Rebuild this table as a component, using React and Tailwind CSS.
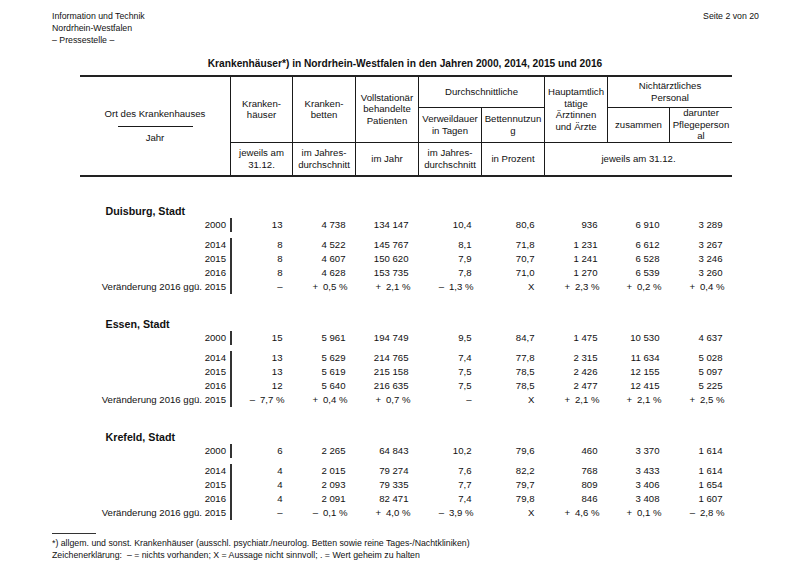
import React from "react";

const sections = [
  {
    name: "Duisburg, Stadt",
    rows: [
      ["2000", "13", "4 738", "134 147", "10,4", "80,6", "936", "6 910", "3 289"],
      ["2014", "8", "4 522", "145 767", "8,1", "71,8", "1 231", "6 612", "3 267"],
      ["2015", "8", "4 607", "150 620", "7,9", "70,7", "1 241", "6 528", "3 246"],
      ["2016", "8", "4 628", "153 735", "7,8", "71,0", "1 270", "6 539", "3 260"],
      ["Veränderung 2016 ggü. 2015", "–", "+\u20020,5 %", "+\u20022,1 %", "–\u20021,3 %", "X", "+\u20022,3 %", "+\u20020,2 %", "+\u20020,4 %"],
    ],
  },
  {
    name: "Essen, Stadt",
    rows: [
      ["2000", "15", "5 961", "194 749", "9,5", "84,7", "1 475", "10 530", "4 637"],
      ["2014", "13", "5 629", "214 765", "7,4", "77,8", "2 315", "11 634", "5 028"],
      ["2015", "13", "5 619", "215 158", "7,5", "78,5", "2 426", "12 155", "5 097"],
      ["2016", "12", "5 640", "216 635", "7,5", "78,5", "2 477", "12 415", "5 225"],
      ["Veränderung 2016 ggü. 2015", "–\u20027,7 %", "+\u20020,4 %", "+\u20020,7 %", "–", "X", "+\u20022,1 %", "+\u20022,1 %", "+\u20022,5 %"],
    ],
  },
  {
    name: "Krefeld, Stadt",
    rows: [
      ["2000", "6", "2 265", "64 843", "10,2", "79,6", "460", "3 370", "1 614"],
      ["2014", "4", "2 015", "79 274", "7,6", "82,2", "768", "3 433", "1 614"],
      ["2015", "4", "2 093", "79 335", "7,7", "79,7", "809", "3 406", "1 654"],
      ["2016", "4", "2 091", "82 471", "7,4", "79,8", "846", "3 408", "1 607"],
      ["Veränderung 2016 ggü. 2015", "–", "–\u20020,1 %", "+\u20024,0 %", "–\u20023,9 %", "X", "+\u20024,6 %", "+\u20020,1 %", "–\u20022,8 %"],
    ],
  },
];

const cols = "grid grid-cols-[150px_62px_63px_63px_63px_63px_63px_62px_63px]";
const cell = "flex flex-col items-center justify-center text-center border-[#1a1a1a]";

const DataRow = ({ row, first }) => (
  <div className={cols + (first ? " pb-[6px]" : "")}>
    <div className="text-right pr-[4px] leading-[14px]">{row[0]}</div>
    {row.slice(1).map((v, i) => (
      <div
        key={i}
        className={
          "text-right leading-[14px] whitespace-pre " +
          (v.includes("%") ? "pr-[7.5px]" : "pr-[9.5px]") +
          (i === 0 ? " border-l-2 border-[#333]" : "")
        }
      >
        {v}
      </div>
    ))}
  </div>
);

const App = () => {
  return (
    <div className="w-[810px] h-[572px] bg-white text-[#111] font-['Liberation_Sans',Arial,sans-serif] overflow-hidden">
      <div className="flex justify-between pl-[52px] pr-[51px] pt-[10px] text-[8.75px] leading-[12px]">
        <div>
          <div>Information und Technik</div>
          <div>Nordrhein-Westfalen</div>
          <div>– Pressestelle –</div>
        </div>
        <div>Seite 2 von 20</div>
      </div>

      <div className="mt-[10.5px] text-center font-bold text-[10.2px] leading-[14px]">
        Krankenhäuser*) in Nordrhein-Westfalen in den Jahren 2000, 2014, 2015 und 2016
      </div>

      {/* Tabellenkopf */}
      <div className={cols + " ml-[80px] w-[652px] mt-[4px] grid-rows-[31px_34px_33px] border-t-2 border-b-2 border-[#222] text-[9.6px] leading-[11.5px]"}>
        <div className={cell + " row-span-3 col-start-1 row-start-1"}>
          <div className="leading-[12px]">Ort des Krankenhauses</div>
          <div className="w-[75px] h-px bg-[#1a1a1a] mt-[6px]"></div>
          <div className="leading-[12px] mt-[5px]">Jahr</div>
        </div>
        <div className={cell + " row-span-2 col-start-2 row-start-1 border-l"}>Kranken-<br />häuser</div>
        <div className={cell + " row-span-2 col-start-3 row-start-1 border-l"}>Kranken-<br />betten</div>
        <div className={cell + " row-span-2 col-start-4 row-start-1 border-l"}>Vollstationär<br />behandelte<br />Patienten</div>
        <div className={cell + " col-span-2 col-start-5 row-start-1 border-l border-b"}>Durchschnittliche</div>
        <div className={cell + " row-span-2 col-start-7 row-start-1 border-l"}>Hauptamtlich<br />tätige<br />Ärztinnen<br />und Ärzte</div>
        <div className={cell + " col-span-2 col-start-8 row-start-1 border-l border-b"}>Nichtärztliches<br />Personal</div>

        <div className={cell + " col-start-5 row-start-2 border-l"}>Verweildauer<br />in Tagen</div>
        <div className={cell + " col-start-6 row-start-2 border-l"}>Bettennutzun<br />g</div>
        <div className={cell + " col-start-8 row-start-2 border-l"}>zusammen</div>
        <div className={cell + " col-start-9 row-start-2 border-l"}>darunter<br />Pflegeperson<br />al</div>

        <div className={cell + " col-start-2 row-start-3 border-l border-t"}>jeweils am<br />31.12.</div>
        <div className={cell + " col-start-3 row-start-3 border-l border-t"}>im Jahres-<br />durchschnitt</div>
        <div className={cell + " col-start-4 row-start-3 border-l border-t"}>im Jahr</div>
        <div className={cell + " col-start-5 row-start-3 border-l border-t"}>im Jahres-<br />durchschnitt</div>
        <div className={cell + " col-start-6 row-start-3 border-l border-t"}>in Prozent</div>
        <div className={cell + " col-span-3 col-start-7 row-start-3 border-l border-t"}>jeweils am 31.12.</div>
      </div>

      {/* Daten */}
      <div className="ml-[80px] w-[652px] mt-[28.5px] text-[9.6px] flex flex-col gap-[24px]">
        {sections.map((s) => (
          <div key={s.name}>
            <div className="pl-[25.5px] font-bold text-[10.7px] leading-[13px]">{s.name}</div>
            {s.rows.map((r, i) => (
              <DataRow key={r[0]} row={r} first={i === 0} />
            ))}
          </div>
        ))}
      </div>

      <div className="ml-[52px] mt-[12.5px] w-[44px] h-px bg-[#333]"></div>
      <div className="ml-[52px] mt-[3px] text-[8.75px] leading-[12px]">
        <div>*) allgem. und sonst. Krankenhäuser (ausschl. psychiatr./neurolog. Betten sowie reine Tages-/Nachtkliniken)</div>
        <div className="whitespace-pre">Zeichenerklärung:  – = nichts vorhanden; X = Aussage nicht sinnvoll; . = Wert geheim zu halten</div>
      </div>
    </div>
  );
};

export default App;
